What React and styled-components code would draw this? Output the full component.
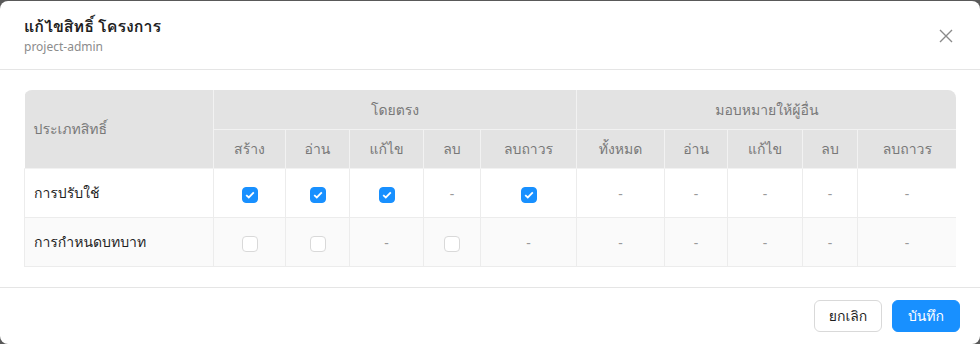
import styled, { createGlobalStyle } from "styled-components"

const GlobalStyle = createGlobalStyle`
  html, body {
    margin: 0;
    padding: 0;
    background: #595959;
    font-family: "Noto Sans", Loma, "Noto Sans Thai Looped", sans-serif;
  }
`

const Dialog = styled.div`
  margin-top: 1px;
  width: 980px;
  height: 343px;
  background: #ffffff;
  border-radius: 8px;
  display: flex;
  flex-direction: column;
  overflow: hidden;
`

const Header = styled.div`
  display: flex;
  align-items: center;
  justify-content: space-between;
  padding: 14px 24px 12px 24px;
  border-bottom: 1px solid #e5e5e5;
`

const TitleBlock = styled.div`
  display: flex;
  flex-direction: column;
`

const Title = styled.div`
  font-size: 16px;
  font-weight: 700;
  line-height: 22px;
  color: #1f1f1f;
`

const Subtitle = styled.div`
  font-size: 12px;
  line-height: 20px;
  color: #8c8c8c;
`

const CloseButton = styled.button`
  width: 24px;
  height: 24px;
  margin-right: -2px;
  border: none;
  background: transparent;
  padding: 0;
  display: flex;
  align-items: center;
  justify-content: center;
  cursor: pointer;
`

const Body = styled.div`
  flex: 1;
  padding: 20px 24px 0;
  border-bottom: 1px solid #e5e5e5;
`

const TableWrap = styled.div`
  border-radius: 8px 8px 0 0;
  overflow: hidden;
`

const Table = styled.table`
  width: 932px;
  table-layout: fixed;
  border-collapse: collapse;
  font-size: 14px;
`

const HeadCell = styled.th`
  height: ${(p) => (p.$top ? "39px" : "38px")};
  padding: 0;
  background: #e3e3e3;
  color: #787878;
  font-weight: 400;
  text-align: ${(p) => (p.$left ? "left" : "center")};
  padding-left: ${(p) => (p.$left ? "9px" : "0")};
  border-right: 1px solid #f2f2f2;
  border-bottom: 1px solid #f2f2f2;
  &:last-child {
    border-right: none;
  }
`

const Row = styled.tr`
  background: ${(p) => (p.$alt ? "#fafafa" : "#ffffff")};
`

const Cell = styled.td`
  height: 48px;
  padding: 0;
  border: 1px solid #ececec;
  color: ${(p) => (p.$label ? "#1f1f1f" : "#9a9a9a")};
  text-align: ${(p) => (p.$label ? "left" : "center")};
  padding-left: ${(p) => (p.$label ? "9px" : "0")};
  vertical-align: middle;
`

const Check = styled.span`
  display: inline-flex;
  align-items: center;
  justify-content: center;
  width: 16px;
  height: 16px;
  box-sizing: border-box;
  border-radius: 4px;
  vertical-align: middle;
  background: ${(p) => (p.$on ? "#1890ff" : "#ffffff")};
  border: 1px solid ${(p) => (p.$on ? "#1890ff" : "#d9d9d9")};
`

const Footer = styled.div`
  display: flex;
  justify-content: flex-end;
  gap: 10px;
  padding: 12px 20px;
`

const Button = styled.button`
  height: 32px;
  width: 68px;
  border-radius: 6px;
  font-family: inherit;
  font-size: 14px;
  cursor: pointer;
  border: 1px solid ${(p) => (p.$primary ? "#1890ff" : "#d9d9d9")};
  background: ${(p) => (p.$primary ? "#1890ff" : "#ffffff")};
  color: ${(p) => (p.$primary ? "#ffffff" : "#1f1f1f")};
`

const widths = [189, 72, 64, 74, 57, 96, 88, 63, 75, 55, 99]
const direct = ["สร้าง", "อ่าน", "แก้ไข", "ลบ", "ลบถาวร"]
const delegate = ["ทั้งหมด", "อ่าน", "แก้ไข", "ลบ", "ลบถาวร"]

// 1 = checked, 0 = unchecked, null = not applicable
const rows = [
  { name: "การปรับใช้", values: [1, 1, 1, null, 1, null, null, null, null, null] },
  { name: "การกำหนดบทบาท", values: [0, 0, null, 0, null, null, null, null, null, null] },
]

const Tick = () => (
  <svg width="10" height="8" viewBox="0 0 10 8">
    <path d="M1.2 4.1 L3.8 6.5 L8.8 1.4" fill="none" stroke="#fff" strokeWidth="1.8" />
  </svg>
)

const App = () => (
  <>
    <GlobalStyle />
    <Dialog>
      <Header>
        <TitleBlock>
          <Title>แก้ไขสิทธิ์ โครงการ</Title>
          <Subtitle>project-admin</Subtitle>
        </TitleBlock>
        <CloseButton>
          <svg width="14" height="14" viewBox="0 0 14 14">
            <path d="M1 1 L13 13 M13 1 L1 13" stroke="#8a8a8a" strokeWidth="1.4" />
          </svg>
        </CloseButton>
      </Header>
      <Body>
        <TableWrap>
          <Table>
            <colgroup>
              {widths.map((w, i) => (
                <col key={i} style={{ width: w }} />
              ))}
            </colgroup>
            <thead>
              <tr>
                <HeadCell rowSpan={2} $left>
                  ประเภทสิทธิ์
                </HeadCell>
                <HeadCell colSpan={5} $top>
                  โดยตรง
                </HeadCell>
                <HeadCell colSpan={5} $top>
                  มอบหมายให้ผู้อื่น
                </HeadCell>
              </tr>
              <tr>
                {[...direct, ...delegate].map((t, i) => (
                  <HeadCell key={i}>{t}</HeadCell>
                ))}
              </tr>
            </thead>
            <tbody>
              {rows.map((r, ri) => (
                <Row key={r.name} $alt={ri % 2 === 1}>
                  <Cell $label>{r.name}</Cell>
                  {r.values.map((v, i) => (
                    <Cell key={i}>
                      {v === null ? "-" : <Check $on={v === 1}>{v === 1 && <Tick />}</Check>}
                    </Cell>
                  ))}
                </Row>
              ))}
            </tbody>
          </Table>
        </TableWrap>
      </Body>
      <Footer>
        <Button>ยกเลิก</Button>
        <Button $primary>บันทึก</Button>
      </Footer>
    </Dialog>
  </>
)

export default App
